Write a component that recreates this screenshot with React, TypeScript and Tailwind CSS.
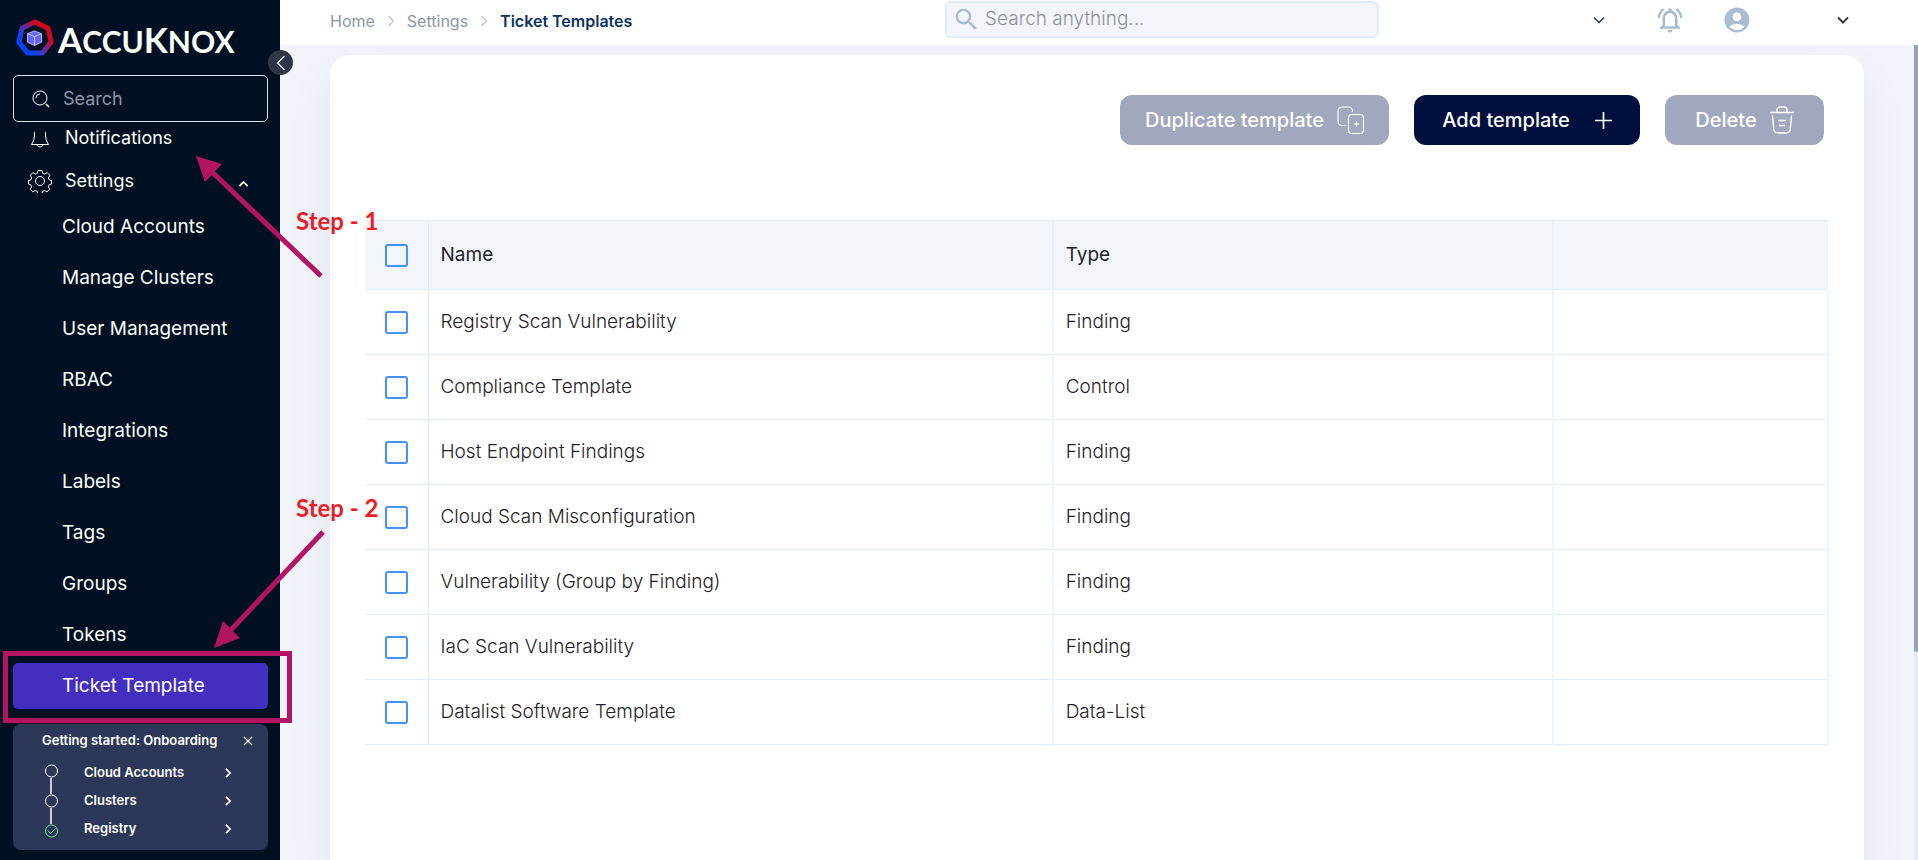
import { useState } from "react";
import { MdAccountCircle, MdOutlineNotificationsActive, MdSearch } from "react-icons/md";

const settingsLinks = [
  "Cloud Accounts",
  "Manage Clusters",
  "User Management",
  "RBAC",
  "Integrations",
  "Labels",
  "Tags",
  "Groups",
  "Tokens",
  "Ticket Template",
];

const templates = [
  { name: "Registry Scan Vulnerability", type: "Finding" },
  { name: "Compliance Template", type: "Control" },
  { name: "Host Endpoint Findings", type: "Finding" },
  { name: "Cloud Scan Misconfiguration", type: "Finding" },
  { name: "Vulnerability (Group by Finding)", type: "Finding" },
  { name: "IaC Scan Vulnerability", type: "Finding" },
  { name: "Datalist Software Template", type: "Data-List" },
];

const onboardingSteps = [
  { label: "Cloud Accounts", done: false },
  { label: "Clusters", done: false },
  { label: "Registry", done: true },
];

function Chevron({ className, d, width = 2 }: { className: string; d: string; width?: number }) {
  return (
    <svg viewBox="0 0 12 12" className={className} fill="none" stroke="currentColor" strokeWidth={width} aria-hidden="true">
      <path d={d} />
    </svg>
  );
}

const RIGHT = "M3.5 1 8.5 6l-5 5";
const LEFT = "M9 0 3 6l6 6";
const DOWN = "M1 3.5 6 8.5l5-5";
const UP = "M1.5 11 6 6.500l4.500 4.500";

function Logo() {
  return (
    <div className="flex h-[57px] items-end gap-1 pl-4 text-white">
      <svg viewBox="0 0 38 38" className="size-[38px]" fill="none" aria-hidden="true">
        <defs>
          <linearGradient id="ring" x1="10" y1="26" x2="27" y2="11" gradientUnits="userSpaceOnUse">
            <stop offset="0.05" stopColor="#0a43ff" />
            <stop offset="0.5" stopColor="#6a2a9c" />
            <stop offset="0.95" stopColor="#d50520" />
          </linearGradient>
        </defs>
        <path d="M19 3 32 9.200 35.200 23 26.400 34H11.600L2.800 23 6 9.200Z" stroke="url(#ring)" strokeWidth="5" strokeLinejoin="round" />
        <path d="m18.500 12 7 2.700v8.500l-7 3.300-7-3.300v-8.500Z" fill="#6666ff" stroke="#b4b4ff" />
        <path d="m11.500 14.700 7 3 7-3M18.500 17.700V26.500" stroke="#c8c8ff" />
      </svg>
      <p className="font-['Lato',sans-serif] text-[30px] leading-8 font-bold">
        <span className="text-[35px]">A</span>CCU<span className="text-[35px]">K</span>NOX
      </p>
    </div>
  );
}

function Sidebar() {
  return (
    <aside className="relative flex w-[280px] shrink-0 flex-col bg-[#001023] text-white">
      <Logo />
      <button
        type="button"
        aria-label="Collapse sidebar"
        className="absolute top-[50px] -right-[13px] z-10 flex size-[25px] items-center justify-center rounded-full bg-[#2f3747] text-white"
      >
        <Chevron className="size-[14px]" d={LEFT} width={1} />
      </button>

      <label className="mt-[18px] mr-3 ml-[13px] flex h-[47px] shrink-0 items-center rounded-[5px] border border-[#dfe2e6] px-[18px]">
        <svg viewBox="0 0 18 18" className="size-[18px] shrink-0" fill="none" stroke="currentColor" aria-hidden="true">
          <circle cx="8" cy="8" r="7" />
          <path d="M4 8a4 4 0 0 1 4-4" />
          <path d="m14 14 3 3" strokeWidth="1.600" />
        </svg>
        <input
          type="search"
          aria-label="Search menu"
          placeholder="Search"
          className="ml-[13px] w-full bg-transparent text-lg outline-none placeholder:text-[#8d96a5]"
        />
      </label>

      <nav className="mt-1 flex flex-1 flex-col overflow-hidden text-lg">
        <a href="#notifications" className="flex h-[34px] shrink-0 items-start">
          <svg viewBox="0 0 20 16" className="mt-[6px] ml-[30px] h-4 w-5" fill="none" stroke="currentColor" aria-hidden="true">
            <path d="M4.500 0C4.500 6 4 9 1.500 12.500h17C16 9 15.500 6 15.500 0M7 13c.5 2.500 5.500 2.500 6 0" />
          </svg>
          <span className="ml-[15px] leading-6">Notifications</span>
        </a>
        <button type="button" className="flex h-[42px] shrink-0 items-center text-left">
          <svg viewBox="0 0 24 24" className="ml-7 size-6" fill="none" stroke="currentColor" strokeLinejoin="round" aria-hidden="true">
            <circle cx="12" cy="12" r="4.500" />
            <path d="M10 1.500h4l.7 2.800 2 .8 2.500-1.500 2.700 2.700-1.500 2.600.8 1.900 2.300.7v3.500l-2.400.8-.8 2 1.400 2.500-2.700 2.600-2.400-1.400-2 .8-.7 2.300h-4l-.7-2.300-2-.8-2.400 1.400-2.600-2.600 1.400-2.500-.8-2L.5 15v-3.500l2.400-.7.8-1.900-1.500-2.600 2.700-2.700 2.400 1.500 2-.8Z" />
          </svg>
          <span className="ml-[13px]">Settings</span>
          <Chevron className="mr-[31px] ml-auto size-[11px]" d={UP} />
        </button>
        <ul className="mt-[2px] mr-3 ml-[13px] flex flex-col gap-[5px] text-[19px]">
          {settingsLinks.map((label) => (
            <li key={label}>
              <a
                href="#settings"
                aria-current={label === "Ticket Template" ? "page" : undefined}
                className="flex h-[46px] items-center rounded-[5px] pl-[49px] aria-[current=page]:bg-[#432fbf]"
              >
                {label}
              </a>
            </li>
          ))}
        </ul>
      </nav>

      <section className="mr-3 mb-[10px] ml-[13px] h-[126px] shrink-0 rounded-lg bg-[#2c3857] pt-2 text-[13px] font-semibold">
        <div className="flex h-[18px] items-center pl-[29px]">
          <h2>Getting started: Onboarding</h2>
          <button type="button" aria-label="Dismiss onboarding" className="mr-[15px] ml-auto">
            <Chevron className="size-[10px]" d="m1 1 10 10M11 1 1 11" width={1.5} />
          </button>
        </div>
        <div className="mt-[14px] flex">
          <svg viewBox="0 0 14 74" className="ml-8 h-[74px] w-[14px]" fill="none" stroke="white" aria-hidden="true">
            <circle cx="6.500" cy="7" r="6" />
            <circle cx="6.500" cy="37" r="6" />
            <path d="M6 14v16M6 44v16" strokeWidth="1.500" />
            <g stroke="#6ee7a0">
              <circle cx="6.500" cy="67" r="6" />
              <path d="m3 67 2.500 2.500 5-5" />
            </g>
          </svg>
          <ul className="flex flex-1 flex-col justify-between">
            {onboardingSteps.map((step) => (
              <li key={step.label}>
                <a href="#onboarding" className="flex h-[18px] items-center pl-[25px]">
                  {step.label}
                  <Chevron className="mr-[35px] ml-auto size-[10px]" d={RIGHT} />
                </a>
              </li>
            ))}
          </ul>
        </div>
      </section>
    </aside>
  );
}

function TopBar() {
  return (
    <header className="flex h-[45px] shrink-0 items-start bg-white pl-[50px]">
      <nav aria-label="Breadcrumb" className="mt-[11px] flex w-[615px] items-center text-base leading-5 text-[#8a97a8]">
        <a href="#home">Home</a>
        <Chevron className="mx-[10px] size-[12px] text-[#8f99bb]" d={RIGHT} width={1} />
        <a href="#settings">Settings</a>
        <Chevron className="mx-[10px] size-[12px] text-[#8f99bb]" d={RIGHT} width={1} />
        <span aria-current="page" className="font-semibold text-[#0b3260]">Ticket Templates</span>
      </nav>
      <label className="mt-px flex h-[37px] w-[434px] items-center rounded-md border-2 border-[#dfecff] bg-[#f2f5fa] pl-[5px]">
        <MdSearch className="size-[29px] shrink-0 text-[#a9bcd3]" />
        <input
          type="search"
          aria-label="Search anything"
          placeholder="Search anything..."
          className="ml-1 w-full bg-transparent text-[19px] font-light outline-none placeholder:text-[#8f9398]"
        />
      </label>
      <div className="mt-[5px] mr-[69px] ml-auto flex h-[30px] items-center text-[#a9bcd3]">
        <button type="button" aria-label="Select workspace">
          <Chevron className="size-3 text-[#25335c]" d={DOWN} width={1.5} />
        </button>
        <button type="button" aria-label="Alerts" className="ml-[50px]">
          <MdOutlineNotificationsActive className="size-[30px]" />
        </button>
        <button type="button" aria-label="Account" className="ml-[37px] flex items-center">
          <MdAccountCircle className="size-[30px]" />
          <Chevron className="ml-[85px] size-3 text-[#3a3a3a]" d={DOWN} />
        </button>
      </div>
    </header>
  );
}

function Toolbar() {
  return (
    <div className="flex h-[50px] justify-end gap-[25px] pr-[5px] text-xl font-medium text-white">
      <button type="button" className="flex w-[269px] items-center justify-center gap-[13px] rounded-xl bg-[#a1a8bd]">
        Duplicate template
        <svg viewBox="0 0 27 28" className="h-7 w-[27px]" fill="none" stroke="currentColor" strokeWidth="1.200" aria-hidden="true">
          <path d="M9 19.500H5a4 4 0 0 1-4-4V5a4 4 0 0 1 4-4h6.500a4 4 0 0 1 4 4v1" />
          <rect x="11.500" y="8.500" width="15" height="19" rx="3.500" />
          <path d="M19.500 15.500v5M17 18h5" />
        </svg>
      </button>
      <button type="button" className="flex w-[226px] items-center justify-center gap-[25px] rounded-xl bg-[#000f3e]">
        Add template
        <Chevron className="size-[17px]" d="M6 0v12M0 6h12" width={1.2} />
      </button>
      <button type="button" className="flex w-[159px] items-center justify-center gap-[13px] rounded-xl bg-[#a1a8bd]">
        Delete
        <svg viewBox="0 0 24 28" className="h-7 w-6" fill="none" stroke="currentColor" strokeWidth="1.400" aria-hidden="true">
          <path d="M0 6.500h24M7 6V4a3 3 0 0 1 3-3h4a3 3 0 0 1 3 3v2M2.500 9.500l1.300 14a4 4 0 0 0 4 3.500h8.400a4 4 0 0 0 4-3.500l1.300-14M8 14.500h8M9 19.500h6" />
        </svg>
      </button>
    </div>
  );
}

function Tick({ label, checked, onChange }: { label: string; checked: boolean; onChange: () => void }) {
  return (
    <input
      type="checkbox"
      aria-label={label}
      checked={checked}
      onChange={onChange}
      className="mx-auto block size-[23px] appearance-none rounded-[3px] border-2 border-[#4690ff] checked:bg-[#4690ff]"
    />
  );
}

function TemplateTable() {
  const [selected, setSelected] = useState<string[]>([]);
  const all = selected.length === templates.length;
  const toggle = (name: string) =>
    setSelected((s) => (s.includes(name) ? s.filter((n) => n !== name) : [...s, name]));

  return (
    <table className="mt-[75px] w-full table-fixed border-collapse text-left text-[19px] text-[#1f2227]">
      <colgroup>
        <col className="w-[63px]" />
        <col className="w-[42.7%]" />
        <col className="w-[34.2%]" />
        <col />
      </colgroup>
      <thead>
        <tr className="h-[69px] border-y border-[#dfecff] bg-[#f2f5fa]">
          <th className="border-r border-[#dfecff]">
            <Tick
              label="Select all templates"
              checked={all}
              onChange={() => setSelected(all ? [] : templates.map((t) => t.name))}
            />
          </th>
          <th className="border-r-2 border-[#e6f0ff] pl-3 font-normal">Name</th>
          <th className="border-r-2 border-[#e6f0ff] pl-3 font-normal">Type</th>
          <td />
        </tr>
      </thead>
      <tbody>
        {templates.map((t) => (
          <tr key={t.name} className="h-[65px] border-b border-[#dfecff] font-light">
            <td className="border-r border-[#dfecff]">
              <Tick label={`Select ${t.name}`} checked={selected.includes(t.name)} onChange={() => toggle(t.name)} />
            </td>
            <td className="border-r-2 border-[#eff5ff] pl-3">{t.name}</td>
            <td className="border-r-2 border-[#eff5ff] pl-3">{t.type}</td>
            <td className="border-r-2 border-[#eff5ff]" />
          </tr>
        ))}
      </tbody>
    </table>
  );
}

function Callouts() {
  return (
    <div className="pointer-events-none absolute inset-0 z-20 font-['Lato',sans-serif] text-2xl leading-7 font-bold text-[#ee1c25]">
      <div className="absolute top-[651px] left-[3px] h-[72px] w-[289px] border-[5px] border-[#b31564]" />
      <svg className="absolute top-0 left-0 h-[700px] w-[400px]" viewBox="0 0 400 700" fill="#b31564" stroke="#b31564" aria-hidden="true">
        <path d="M321 276 210 170M323 532 229 632" strokeWidth="5" />
        <path d="m196 156 26 8-17 18ZM214 648l9-27 17 17Z" stroke="none" />
      </svg>
      <span className="absolute top-[207px] left-[296px]">Step - 1</span>
      <span className="absolute top-[494px] left-[296px]">Step - 2</span>
    </div>
  );
}

export default function App() {
  return (
    <div className="relative flex h-screen overflow-hidden bg-[#f1f4fa] font-['Inter',sans-serif]">
      <Sidebar />
      <div className="flex min-w-0 flex-1 flex-col">
        <TopBar />
        <div className="flex min-h-0 flex-1">
          <main className="min-w-0 flex-1 overflow-hidden pt-[10px] pr-[50px] pl-[50px]">
            <div className="h-full rounded-t-[20px] bg-white px-[35px] pt-10 shadow-[0_20px_50px_rgba(30,40,80,0.06)]">
              <Toolbar />
              <TemplateTable />
            </div>
          </main>
          <div className="w-1 bg-[#e6ebf7]">
            <div className="h-[74.5%] rounded-b-sm bg-[#98a2bc]" />
          </div>
        </div>
      </div>
      <Callouts />
    </div>
  );
}
